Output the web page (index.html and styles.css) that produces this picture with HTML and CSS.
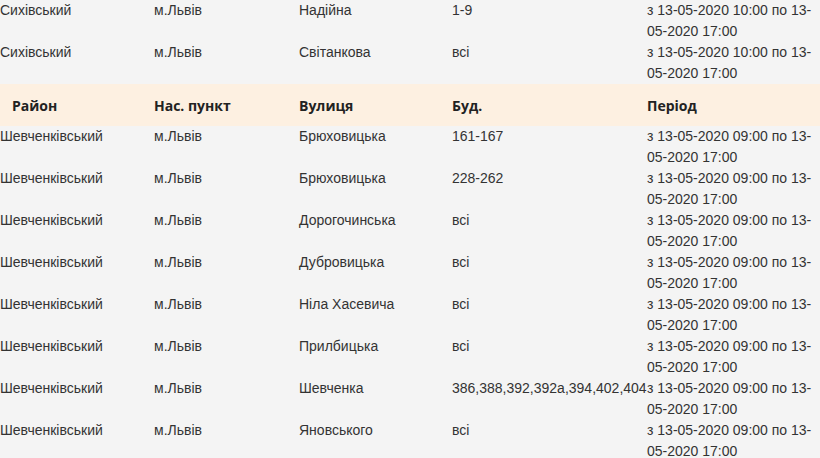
FILE: index.html
```html
<!DOCTYPE html>
<html lang="uk">
<head>
<meta charset="utf-8">
<title>Відключення</title>
<link rel="stylesheet" href="styles.css">
</head>
<body>
<table class="outages">
  <colgroup>
    <col class="c-district">
    <col class="c-town">
    <col class="c-street">
    <col class="c-house">
    <col class="c-period">
  </colgroup>
  <tbody>
    <tr><td>Сихівський</td><td>м.Львів</td><td>Надійна</td><td>1-9</td><td>з 13-05-2020 10:00 по 13-&#8203;05-2020 17:00</td></tr>
    <tr><td>Сихівський</td><td>м.Львів</td><td>Світанкова</td><td>всі</td><td>з 13-05-2020 10:00 по 13-&#8203;05-2020 17:00</td></tr>
    <tr class="head"><th class="first">Район</th><th>Нас. пункт</th><th>Вулиця</th><th>Буд.</th><th>Період</th></tr>
    <tr><td>Шевченківський</td><td>м.Львів</td><td>Брюховицька</td><td>161-167</td><td>з 13-05-2020 09:00 по 13-&#8203;05-2020 17:00</td></tr>
    <tr><td>Шевченківський</td><td>м.Львів</td><td>Брюховицька</td><td>228-262</td><td>з 13-05-2020 09:00 по 13-&#8203;05-2020 17:00</td></tr>
    <tr><td>Шевченківський</td><td>м.Львів</td><td>Дорогочинська</td><td>всі</td><td>з 13-05-2020 09:00 по 13-&#8203;05-2020 17:00</td></tr>
    <tr><td>Шевченківський</td><td>м.Львів</td><td>Дубровицька</td><td>всі</td><td>з 13-05-2020 09:00 по 13-&#8203;05-2020 17:00</td></tr>
    <tr><td>Шевченківський</td><td>м.Львів</td><td>Ніла Хасевича</td><td>всі</td><td>з 13-05-2020 09:00 по 13-&#8203;05-2020 17:00</td></tr>
    <tr><td>Шевченківський</td><td>м.Львів</td><td>Прилбицька</td><td>всі</td><td>з 13-05-2020 09:00 по 13-&#8203;05-2020 17:00</td></tr>
    <tr><td>Шевченківський</td><td>м.Львів</td><td>Шевченка</td><td>386,388,392,392а,394,402,404</td><td>з 13-05-2020 09:00 по 13-&#8203;05-2020 17:00</td></tr>
    <tr><td>Шевченківський</td><td>м.Львів</td><td>Яновського</td><td>всі</td><td>з 13-05-2020 09:00 по 13-&#8203;05-2020 17:00</td></tr>
  </tbody>
</table>
</body>
</html>
```

FILE: styles.css
```css
html, body {
  margin: 0;
  padding: 0;
  background: #f4f4f4;
}

body {
  font-family: "Liberation Sans", Arial, sans-serif;
  font-size: 14px;
  line-height: 21px;
  color: #333333;
  overflow: hidden;
}

.outages {
  width: 820px;
  table-layout: fixed;
  border-collapse: collapse;
  border-spacing: 0;
}

.c-district { width: 154px; }
.c-town { width: 145px; }
.c-street { width: 153px; }
.c-house { width: 195px; }
.c-period { width: 173px; }

.outages td {
  padding: 0;
  height: 42px;
  vertical-align: top;
  white-space: nowrap;
  overflow: visible;
}

.outages td:last-child {
  white-space: normal;
}

.outages .head {
  background: #fdf0e1;
}

.outages th {
  font-family: "Open Sans", "Liberation Sans", sans-serif;
  font-weight: 700;
  font-size: 14px;
  color: #222222;
  text-align: left;
  height: 42px;
  padding: 0;
  vertical-align: middle;
}

.outages th.first {
  padding-left: 12px;
}
```
